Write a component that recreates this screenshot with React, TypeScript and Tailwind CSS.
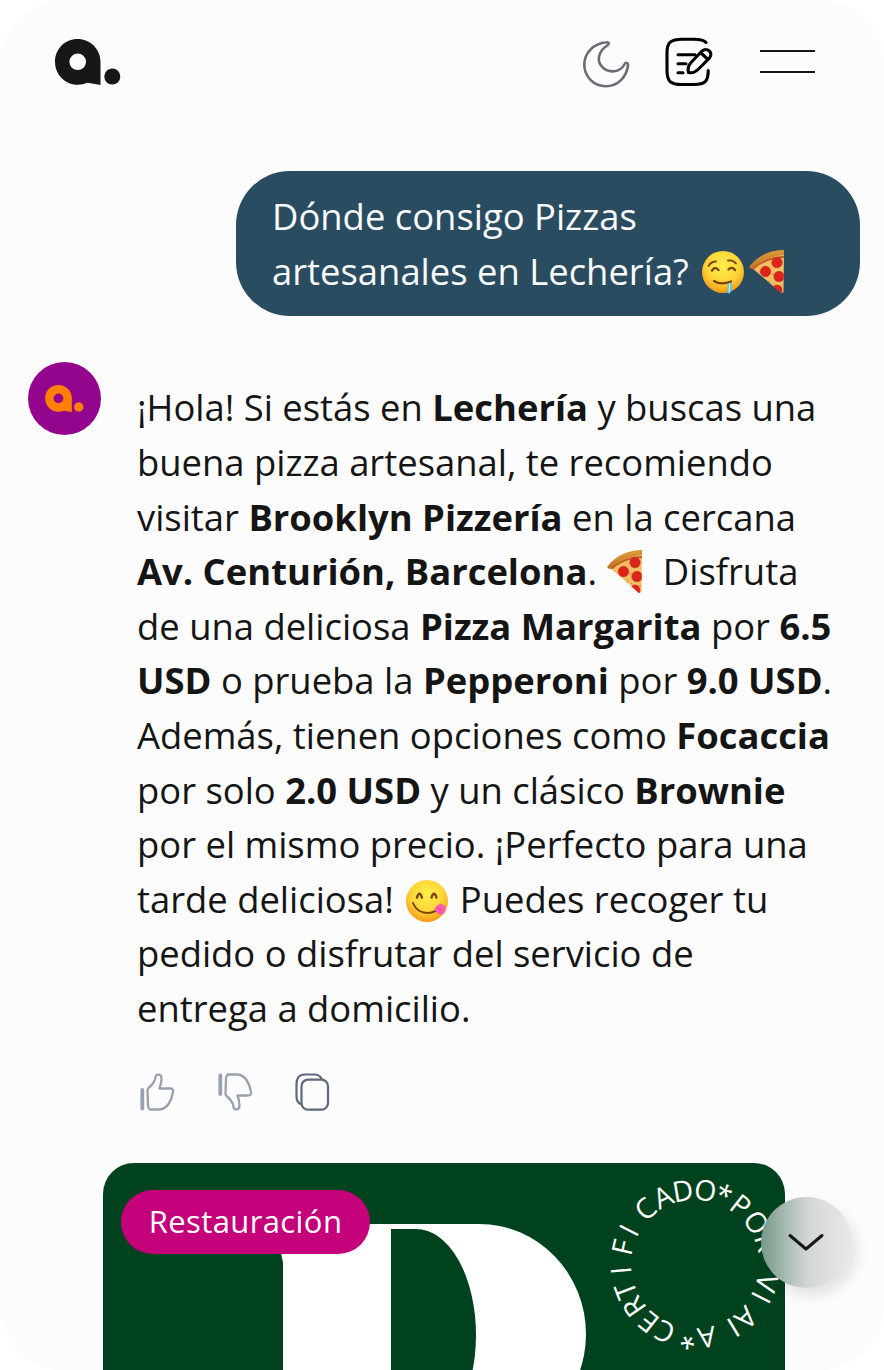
import type { ReactNode } from "react";

function Logo({ className }: { className: string }) {
  return (
    <svg viewBox="0 0 66 46" className={className} fill="currentColor" aria-hidden="true">
      <path
        fillRule="evenodd"
        d="M22.5 0C35 0 45.5 10 45.5 22.5V46L32.500 43.700C29.500 45 26 45.700 22.500 45.700C10 45.700 0 35.500 0 22.700S10 0 22.500 0ZM22.700 14.500A8.300 8.300 0 1 0 22.700 31.100A8.300 8.300 0 1 0 22.700 14.500Z"
      />
      <circle cx="57.300" cy="37.500" r="8" />
    </svg>
  );
}

function Moon() {
  return (
    <svg viewBox="0 0 48 48" className="mt-[3px] h-12 w-12" fill="none" stroke="#6b6b76" strokeWidth="2.600" strokeLinejoin="round" aria-hidden="true">
      <path d="M24.300 2.300C27.200 1.900 27.400 4 25.500 5.300C15.500 12 14.500 21.500 20.700 27.400C27 33.500 38 32.300 42 25C43.500 21.800 46.500 22.500 46 25.500C44.500 37.500 35.500 46.200 24 46.200C11.500 46.200 2.300 36.500 2.300 24.500C2.300 13 11.500 3.500 24.300 2.300Z" />
    </svg>
  );
}

function Compose() {
  return (
    <svg viewBox="0 0 50 52" className="h-[52px] w-[50px]" fill="none" stroke="#000" strokeWidth="3.100" strokeLinecap="round" strokeLinejoin="round" aria-hidden="true">
      <path d="M43 6.500C40.500 3 35 3.200 30 3.200H19C7.500 3.200 4 6.500 4 17V34C4 45.500 7.500 48.500 19 48.500H31C42 48.500 45.200 45.500 45.200 34.500" />
      <path d="M15 18.700H32M15 27.700H23M15 36.700H20" />
      <path d="M25.500 36.500C24.500 32.500 26 28.500 28.500 26L38.500 15.500C43.500 10.500 51 16.500 46.500 22L35 33.500C32 36.500 29 37.200 25.500 36.500ZM38 17L45 23.500" />
    </svg>
  );
}

function Pizza({ className }: { className: string }) {
  return (
    <svg viewBox="0 0 38 46" className={className} aria-hidden="true">
      <defs>
        <linearGradient id="crust" x1="0" y1="0" x2="0.300" y2="1">
          <stop offset="0" stopColor="#e9ad3d" />
          <stop offset="1" stopColor="#b96822" />
        </linearGradient>
        <clipPath id="slice">
          <path d="M5 19C12 11 23 6 36 5L35.500 44.500Q34 45.500 31 42.500Z" />
        </clipPath>
      </defs>
      <path d="M4 19C12 11 23 6 36 5L35.500 43Q34 45 31 42Z" fill="#f6bd67" />
      <g clipPath="url(#slice)">
        <path d="M5 20Q18 8 37 8" stroke="#be5b23" strokeWidth="2" fill="none" />
        <g fill="#dc241c" stroke="#b8321e" strokeWidth="0.600">
          <circle cx="17.500" cy="22.500" r="5.200" />
          <circle cx="29" cy="13.500" r="5.200" />
          <circle cx="31" cy="27.500" r="5.200" />
          <circle cx="29" cy="41" r="5" />
        </g>
        <path d="M24 24l1 2M20 32l2 1M25 35l1-1M34 36v2" stroke="#d78232" strokeWidth="1" />
      </g>
      <path d="M1 18C10 6 23 1 36 1V6C23 7 12 12 5 20Q2 20 1 18Z" fill="url(#crust)" />
    </svg>
  );
}

function Face({ className, children }: { className: string; children: ReactNode }) {
  return (
    <svg viewBox="0 0 44 44" className={className} fill="none" strokeLinecap="round" aria-hidden="true">
      <defs>
        <radialGradient id="face" cx="0.500" cy="0.350" r="0.650">
          <stop offset="0" stopColor="#fff04d" />
          <stop offset="0.600" stopColor="#ffd438" />
          <stop offset="1" stopColor="#f39a16" />
        </radialGradient>
      </defs>
      <circle cx="22" cy="22" r="21" fill="url(#face)" />
      {children}
    </svg>
  );
}

function Drooling() {
  return (
    <Face className="ml-[3px] inline-block h-[44px] w-[44px] align-[-9px]">
      <g stroke="#7a430c" strokeWidth="1.800">
        <path d="M7.500 16Q10 11.500 15 11.500M27 10.500Q32 9.500 35 13.500" />
        <path d="M11 20.500Q14 16 17.500 20M27.500 19.500Q31 16 34 20" strokeWidth="2.400" />
        <path d="M13 31Q20 35.500 30 31.500" strokeWidth="2.300" />
      </g>
      <path d="M26 33.500Q29 34 31 32Q30 37 30.500 41Q28 46 25.500 42Q28 38 26 33.500Z" fill="#54b9e5" />
      <path d="M28.500 34Q29 38 28 41" stroke="#bcecff" strokeWidth="1.500" />
    </Face>
  );
}

function Yummy() {
  return (
    <Face className="mr-px ml-[2px] inline-block h-[44px] w-[44px] align-[-10px]">
      <path d="M12 18.500Q14.500 11 17 18.500M26.500 18.500Q29 11 31.500 18.500" stroke="#7a430c" strokeWidth="2.400" />
      <path d="M8 24Q12 34 23 34Q31 34 35 27" stroke="#7a430c" strokeWidth="2" />
      <path d="M29.500 30Q31 26 36 24.500L40.500 27.500Q41.500 33.500 37 35.500Q32 36.500 29.500 30Z" fill="#ff5cab" />
      <path d="M33 29l3 2" stroke="#e0438f" strokeWidth="1.200" />
    </Face>
  );
}

function ThumbUp() {
  return (
    <svg viewBox="0 0 36 40" className="h-10 w-9" fill="none" stroke="#98a1b0" strokeWidth="2.300" strokeLinejoin="round" strokeLinecap="round" aria-hidden="true">
      <path d="M3.300 18V36.500" strokeWidth="3.800" />
      <path d="M8.500 18.500Q8.500 17 9.500 16Q14.500 12 16 7.500Q16.500 3 18.500 2.700Q22.500 2.200 22.500 6.500Q22.500 11 20.500 16.500H31Q34.700 16.500 34 20Q33 27 29.500 32Q26 37 20.500 37.500H11.500Q9.300 37.500 9 33Z" />
    </svg>
  );
}

function Stack() {
  return (
    <svg viewBox="0 0 36 40" className="h-10 w-9" fill="none" stroke="#5e687d" strokeWidth="2.200" strokeLinejoin="round" aria-hidden="true">
      <path d="M28 7.500Q26 2.500 20 2.500H11Q2.500 2.500 2.500 12V24Q2.500 31 7.500 32.500" />
      <rect x="7.500" y="7.700" width="26.500" height="30" rx="6.500" />
    </svg>
  );
}

const sealLetters: [string, number][] = [
  ["C", -156], ["E", -141.500], ["R", -125], ["T", -111], ["I", -95],
  ["F", -77], ["I", -63], ["C", -42], ["A", -25.500], ["D", -9.500],
  ["O", 8], ["*", 22.500], ["P", 38], ["O", 56], ["R", 73],
  ["V", 105], ["I", 117], ["A", 136.500], ["I", 149], ["A", 171], ["*", -174.500],
];

function Seal() {
  return (
    <svg viewBox="-100 -100 200 200" className="absolute top-px left-[491.500px] h-[200px] w-[200px] overflow-visible" fill="#fff" aria-hidden="true">
      {sealLetters.map(([letter, angle], i) => (
        <text key={i} transform={`rotate(${angle})`} y="-64" textAnchor="middle" fontSize="28.500" className="font-['Open_Sans',sans-serif] font-normal">
          {letter}
        </text>
      ))}
    </svg>
  );
}

function Monogram() {
  return (
    <div className="absolute top-[61px] left-[147px] h-[146px] w-[337px] overflow-hidden">
      <div className="absolute top-[15px] left-[28px] h-7 w-[6px] bg-white [clip-path:polygon(0_0,100%_0,100%_100%,80%_80%)]" />
      <div className="absolute top-0 left-[33px] h-[220px] w-[303px] rounded-r-[107px_110px] bg-white" />
      <div className="absolute top-[5px] left-[141px] h-[212px] w-[85px] rounded-r-[60px_106px] bg-[#00421e]" />
    </div>
  );
}

export default function App() {
  return (
    <div className="h-[1370px] w-[884px] overflow-hidden bg-white font-['Open_Sans',sans-serif] text-[#151515]">
      <main className="relative flex h-full flex-col overflow-hidden rounded-[64px] bg-[#fcfcfc]">
        <header className="flex h-[124px] shrink-0 items-center justify-between pr-[69px] pl-[55px]">
          <Logo className="h-[46px] w-[66px] text-[#171717]" />
          <div className="flex items-center">
            <Moon />
            <div className="ml-[33.500px]"><Compose /></div>
            <div className="-mt-px ml-[47px] flex w-[55px] flex-col gap-[19px]">
              <div className="h-0.5 bg-[#171717]" />
              <div className="h-0.5 bg-[#171717]" />
            </div>
          </div>
        </header>

        <div className="mt-[47px] mr-6 h-[145px] w-[624px] shrink-0 self-end rounded-[54px] bg-[#2a4c60] pt-[18px] pl-9 text-[36.400px] leading-[54.600px] whitespace-nowrap text-[#f8fafb]">
          <p>Dónde consigo Pizzas</p>
          <p className="h-[54.600px]">artesanales en Lechería? <Drooling /><Pizza className="ml-[3px] inline-block h-[46px] w-[38px] align-[-10px]" /></p>
        </div>

        <section className="mt-[46px] flex shrink-0 items-start pl-7">
          <div className="flex h-[73px] w-[73px] items-center justify-center rounded-full bg-[#93058c]">
            <Logo className="h-[27px] w-[39px] text-[#ff8000]" />
          </div>
          <div className="ml-9 pt-[18.400px]">
            <div className="text-[36.380px] leading-[54.600px] whitespace-nowrap">
              <p>¡Hola! Si estás en <b>Lechería</b> y buscas una</p>
              <p>buena pizza artesanal, te recomiendo</p>
              <p>visitar <b>Brooklyn Pizzería</b> en la cercana</p>
              <p className="h-[54.600px]"><b>Av. Centurión, Barcelona</b>. <Pizza className="inline-block h-[46px] w-[38px] align-[-10px]" />{" "}<span className="ml-[9px]">Disfruta</span></p>
              <p>de una deliciosa <b>Pizza Margarita</b> por <b>6.5</b></p>
              <p><b>USD</b> o prueba la <b>Pepperoni</b> por <b>9.0 USD</b>.</p>
              <p>Además, tienen opciones como <b>Focaccia</b></p>
              <p>por solo <b>2.0 USD</b> y un clásico <b>Brownie</b></p>
              <p>por el mismo precio. ¡Perfecto para una</p>
              <p className="h-[54.600px]">tarde deliciosa! <Yummy /> Puedes recoger tu</p>
              <p>pedido o disfrutar del servicio de</p>
              <p>entrega a domicilio.</p>
            </div>
            <div className="mt-[36.600px] flex gap-[41.500px] pl-[2px]">
              <ThumbUp />
              <div className="rotate-180"><div className="-scale-x-100"><ThumbUp /></div></div>
              <Stack />
            </div>
          </div>
        </section>

        <article className="relative mt-[51px] ml-[103px] h-[207px] w-[682px] shrink-0 overflow-hidden rounded-t-[31px] bg-[#00421e]">
          <Monogram />
          <Seal />
          <div className="absolute top-[27px] left-[18px] flex h-16 w-[249px] items-center justify-center rounded-full bg-[#c4007a] pb-[2px] text-[31px] tracking-[0.400px] text-white">
            Restauración
          </div>
        </article>

        <button aria-label="Bajar" className="absolute top-[1197px] left-[761px] flex h-[91px] w-[91px] items-center justify-center rounded-full bg-linear-to-r from-[#78998a] via-[#d2d6d3] to-[#e9e9e9] pr-[2px] shadow-[5px_8px_14px_rgba(0,0,0,0.1)]">
          <svg viewBox="0 0 38 20" className="h-5 w-[38px]" fill="none" stroke="#171717" strokeWidth="3" strokeLinecap="round" strokeLinejoin="round" aria-hidden="true">
            <path d="M3 2.500L19 16L35 2.500" />
          </svg>
        </button>
      </main>
    </div>
  );
}
